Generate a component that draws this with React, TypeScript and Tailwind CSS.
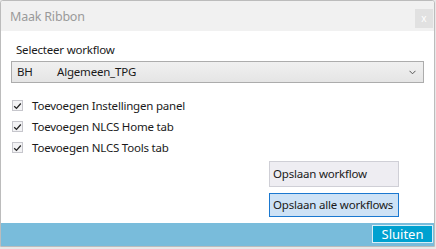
import React from "react";

const font = { fontFamily: '"Noto Sans", "Open Sans", sans-serif' };

function Check({ label }: { label: string }) {
  return (
    <div className="flex items-center h-[21px]">
      <div className="w-[11px] h-[11px] border border-[#c6c6cc] bg-[#f3f3f5] flex items-center justify-center">
        <svg width="9" height="8" viewBox="0 0 9 8">
          <path d="M1.2 4.2 L3.5 6.4 L7.8 1.5" fill="none" stroke="#222" strokeWidth="1.3" />
        </svg>
      </div>
      <span className="ml-[9px] text-[11.5px] tracking-[-0.2px] text-[#1a1a1a] leading-none whitespace-nowrap">{label}</span>
    </div>
  );
}

export default function App() {
  return (
    <div className="w-[436px] h-[249px] bg-[#e8e8e8]" style={font}>
      <div className="w-[435px] h-[247px] border border-[#bcbcbc] rounded-tl-[3px] rounded-tr-[3px] bg-white flex flex-col overflow-hidden">
        <div className="h-[30px] shrink-0 bg-[#f1f1f1] flex items-center justify-between pl-[9px] pr-[1px]">
          <span className="text-[12.5px] tracking-[-0.2px] text-[#9a9a9a] mt-[3px]">Maak Ribbon</span>
          <div className="w-[18px] h-[19px] bg-[#e1e1e1] flex items-center justify-center text-[10px] text-white mt-[4px]">x</div>
        </div>
        <div className="flex-1 flex flex-col px-[10px]">
          <div className="text-[11.5px] tracking-[-0.2px] text-[#1a1a1a] pl-[5px] mt-[11px] leading-[16px]">Selecteer workflow</div>
          <div className="mt-[3px] h-[22px] border border-[#acacac] bg-gradient-to-b from-[#f0f0f0] to-[#e5e5e5] flex items-center pl-[5px] pr-[7px] text-[11.5px] tracking-[-0.2px] text-[#1a1a1a]">
            <span className="w-[40px]">BH</span>
            <span className="flex-1">Algemeen_TPG</span>
            <svg width="7" height="5" viewBox="0 0 7 5">
              <path d="M0.5 0.8 L3.5 3.8 L6.5 0.8" fill="none" stroke="#555" strokeWidth="1" />
            </svg>
          </div>
          <div className="mt-[12px] flex flex-col pl-[1px]">
            <Check label="Toevoegen Instellingen panel" />
            <Check label="Toevoegen NLCS Home tab" />
            <Check label="Toevoegen NLCS Tools tab" />
          </div>
          <div className="flex flex-col items-end pr-[25px] mt-[3px] gap-[6px]">
            <div className="w-[130px] h-[26px] border border-[#cfcfd6] bg-[#eeedf2] text-[11.5px] tracking-[-0.2px] text-[#1a1a1a] flex items-center pl-[3px] whitespace-nowrap">Opslaan workflow</div>
            <div className="w-[130px] h-[24px] border border-[#1a78d0] bg-[#cde2f6] text-[11.5px] tracking-[-0.2px] text-[#1a1a1a] flex items-center pl-[3px] whitespace-nowrap">Opslaan alle workflows</div>
          </div>
        </div>
        <div className="h-[23px] shrink-0 bg-[#79bcdb] flex items-start justify-end pr-[1px] pt-[2px]">
          <div className="w-[61px] h-[18px] bg-[#00a1d0] border border-[#d8eef7] text-white text-[13px] leading-none flex items-center justify-center">Sluiten</div>
        </div>
      </div>
    </div>
  );
}
